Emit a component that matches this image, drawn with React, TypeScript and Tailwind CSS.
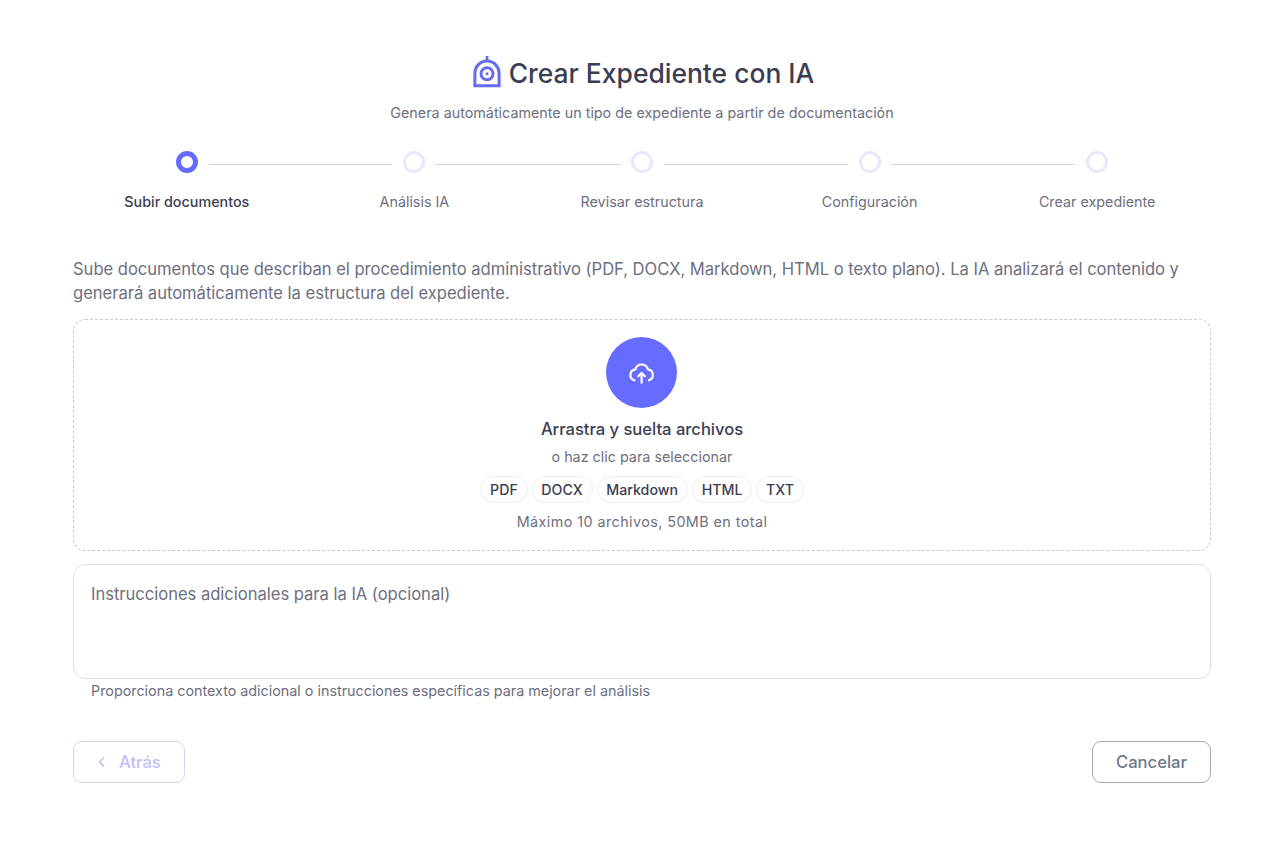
import { useState } from "react";

const steps = [
  "Subir documentos",
  "Análisis IA",
  "Revisar estructura",
  "Configuración",
  "Crear expediente",
];

const formats = ["PDF", "DOCX", "Markdown", "HTML", "TXT"];

function LogoIcon() {
  return (
    <svg
      width="28"
      height="32"
      viewBox="0 0 28 32"
      fill="none"
      stroke="#666cf0"
      className="mb-0.5 shrink-0"
    >
      <path d="M1.9 29.8V17.2a12.1 12.1 0 0 1 24.2 0V29.8z" strokeWidth="3" />
      <path d="M14 0v5" strokeWidth="2.8" />
      <circle cx="14" cy="17.8" r="6" strokeWidth="2.9" />
      <circle cx="14" cy="17.8" r="1.5" fill="#666cf0" stroke="none" />
    </svg>
  );
}

function CloudUploadIcon() {
  return (
    <svg
      width="28"
      height="28"
      viewBox="0 0 28 28"
      fill="none"
      stroke="white"
      strokeWidth="2.2"
      strokeLinecap="round"
      strokeLinejoin="round"
    >
      <path d="M6.3 21.3A5.6 5.6 0 0 1 7.3 10.4a6.5 6.5 0 0 1 12.6 0A5.6 5.6 0 0 1 20.9 21.3" />
      <path d="M13.6 23.8v-9" />
      <path d="m10.3 17.3 3.3-3.3 3.3 3.3" />
    </svg>
  );
}

function StepItem({
  label,
  active,
  first,
}: {
  label: string;
  active: boolean;
  first: boolean;
}) {
  return (
    <div className="relative flex flex-1 flex-col items-center">
      {!first && (
        <div className="absolute top-[13px] right-[calc(50%+22px)] left-[calc(-50%+22px)] h-px bg-[#d2d2d6]" />
      )}
      <div
        className={
          active
            ? "size-[22px] rounded-full border-[5.5px] border-[#666cff]"
            : "size-[22px] rounded-full border-[3px] border-[#e9e7fd]"
        }
      />
      <span
        className={
          active
            ? "mt-[18px] text-[14.33px] leading-[22px] font-medium text-[#3b3e52]"
            : "mt-[18px] text-[14.33px] leading-[22px] text-[#6d6f80]"
        }
      >
        {label}
      </span>
    </div>
  );
}

export default function App() {
  const [notes, setNotes] = useState("");

  return (
    <div className="min-h-[844px] bg-white px-[73px] pt-[55px] pr-[69px] font-['Inter',sans-serif] text-[#6d6f80]">
      {/* Header */}
      <div className="flex h-9 items-center justify-center gap-2 pl-[3px]">
        <LogoIcon />
        <h1 className="text-[26.45px] leading-9 font-medium text-[#3b3e52]">
          Crear Expediente con IA
        </h1>
      </div>
      <p className="mt-[11px] text-center text-[14.34px] leading-[22px]">
        Genera automáticamente un tipo de expediente a partir de documentación
      </p>

      {/* Stepper */}
      <div className="mt-[27px] flex">
        {steps.map((label, i) => (
          <StepItem key={label} label={label} active={i === 0} first={i === 0} />
        ))}
      </div>

      <p className="mt-11 text-[16.6px] leading-6 tracking-[-0.03px]">
        Sube documentos que describan el procedimiento administrativo (PDF,
        DOCX, Markdown, HTML o texto plano). La IA analizará el contenido y
        generará automáticamente la estructura del expediente.
      </p>

      {/* Drop zone */}
      <div className="mt-3.5 flex h-[232px] flex-col items-center rounded-xl border border-dashed border-[#c9c9ce] pt-[17px]">
        <div className="mr-px flex size-[71px] items-center justify-center rounded-full bg-[#666cff]">
          <CloudUploadIcon />
        </div>
        <h2 className="mt-2 text-[16.6px] leading-[26px] font-medium tracking-[-0.03px] text-[#3b3e52]">
          Arrastra y suelta archivos
        </h2>
        <p className="mt-1 text-[14.33px] leading-[22px]">
          o haz clic para seleccionar
        </p>
        <div className="mt-2 flex gap-1">
          {formats.map((format) => (
            <span
              key={format}
              className="flex h-[27px] items-center rounded-full border border-[#ededf0] px-[8.8px] text-[14.2px] font-medium text-[#3b3e52]"
            >
              {format}
            </span>
          ))}
        </div>
        <p className="mt-2 text-[14.33px] leading-[22px] tracking-[0.44px]">
          Máximo 10 archivos, 50MB en total
        </p>
      </div>

      {/* Extra instructions */}
      <textarea
        value={notes}
        onChange={(e) => setNotes(e.target.value)}
        placeholder="Instrucciones adicionales para la IA (opcional)"
        className="mt-[13px] block h-[115px] w-full resize-none rounded-xl border border-[#e0e0e4] px-[17px] py-[17px] text-[16.6px] leading-6 tracking-[-0.03px] outline-none placeholder:text-[#6d6f80]"
      />
      <p className="mt-px px-[18px] text-[14.33px] leading-[22px]">
        Proporciona contexto adicional o instrucciones específicas para mejorar
        el análisis
      </p>

      {/* Actions */}
      <div className="mt-[39px] flex justify-between">
        <button
          disabled
          className="flex h-[42px] w-[112px] items-center gap-2 rounded-[9px] border border-[#d3d3fb] pl-[19px] text-[16.6px] font-medium text-[#c0c0f8]"
        >
          <svg
            width="18"
            height="18"
            viewBox="0 0 18 18"
            fill="none"
            stroke="currentColor"
            strokeWidth="1.7"
            strokeLinecap="round"
            strokeLinejoin="round"
          >
            <path d="M10.5 5 6.5 9l4 4" />
          </svg>
          Atrás
        </button>
        <button className="h-[42px] w-[119px] rounded-[9px] border border-[#a5abb5] text-[16.6px] font-medium text-[#6d788d]">
          Cancelar
        </button>
      </div>
    </div>
  );
}
